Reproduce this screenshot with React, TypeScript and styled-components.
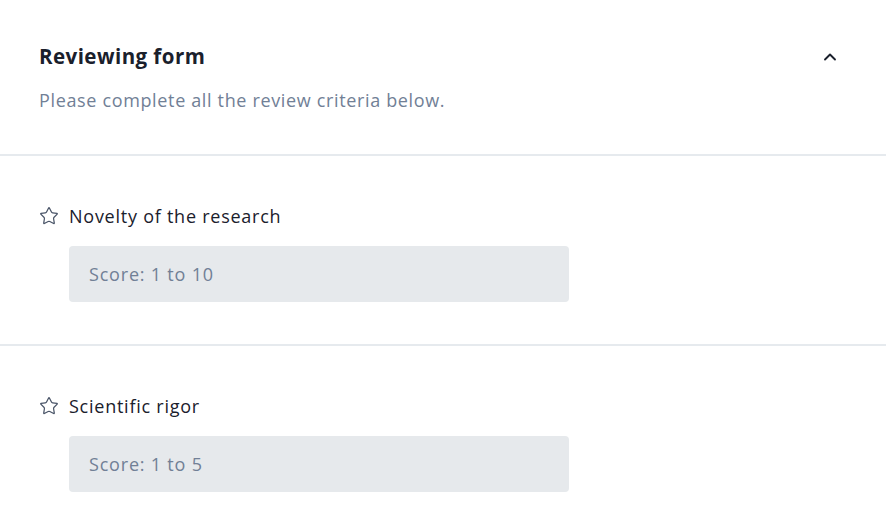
import React from "react";
import styled, { createGlobalStyle } from "styled-components";
import { Star, ChevronUp } from "lucide-react";

const Global = createGlobalStyle`
  html, body { margin: 0; padding: 0; background: #ffffff; }
  body { font-family: "Open Sans", "Noto Sans", "Liberation Sans", sans-serif; -webkit-font-smoothing: antialiased; }
  * { box-sizing: border-box; }
`;

const Page = styled.div`
  width: 886px;
  display: flex;
  flex-direction: column;
`;

const Header = styled.header`
  display: flex;
  align-items: flex-start;
  justify-content: space-between;
  padding: 44px 46px 42px 39px;
  border-bottom: 2px solid #e6eaee;
`;

const HeaderText = styled.div`
  display: flex;
  flex-direction: column;
  gap: 20px;
`;

const Title = styled.h2`
  margin: 0;
  font-size: 20.5px;
  line-height: 24px;
  font-weight: 700;
  letter-spacing: 0.45px;
  color: #1a202c;
`;

const Subtitle = styled.p`
  margin: 0;
  font-size: 18px;
  line-height: 24px;
  letter-spacing: 0.65px;
  color: #718096;
`;

const ToggleButton = styled.button`
  border: none;
  background: transparent;
  padding: 0;
  margin-top: 3px;
  display: flex;
  color: #1a202c;
  cursor: pointer;
`;

const Section = styled.section<{ $last?: boolean }>`
  display: flex;
  flex-direction: column;
  gap: 18px;
  padding: 48px 39px ${(p) => (p.$last ? "40px" : "42px")};
  border-bottom: ${(p) => (p.$last ? "none" : "2px solid #e6eaee")};
`;

const LabelRow = styled.div`
  display: flex;
  align-items: center;
  gap: 10px;
  color: #4a5568;
`;

const Label = styled.span`
  font-size: 18px;
  line-height: 24px;
  letter-spacing: 0.75px;
  color: #1a202c;
`;

const ScoreInput = styled.input`
  margin-left: 30px;
  width: 500px;
  height: 56px;
  border: none;
  border-radius: 4px;
  background: #e6e9ec;
  padding: 0 20px;
  font-family: inherit;
  font-size: 18px;
  letter-spacing: 0.8px;
  color: #1a202c;
  outline: none;
  &::placeholder { color: #718096; }
`;

const criteria = [
  { label: "Novelty of the research", placeholder: "Score: 1 to 10" },
  { label: "Scientific rigor", placeholder: "Score: 1 to 5" },
];

export default function App() {
  return (
    <>
      <Global />
      <Page>
        <Header>
          <HeaderText>
            <Title>Reviewing form</Title>
            <Subtitle>Please complete all the review criteria below.</Subtitle>
          </HeaderText>
          <ToggleButton aria-label="Collapse">
            <ChevronUp size={20} strokeWidth={2.25} />
          </ToggleButton>
        </Header>
        {criteria.map((c, i) => (
          <Section key={c.label} $last={i === criteria.length - 1}>
            <LabelRow>
              <Star size={20} strokeWidth={1.5} />
              <Label>{c.label}</Label>
            </LabelRow>
            <ScoreInput placeholder={c.placeholder} />
          </Section>
        ))}
      </Page>
    </>
  );
}
